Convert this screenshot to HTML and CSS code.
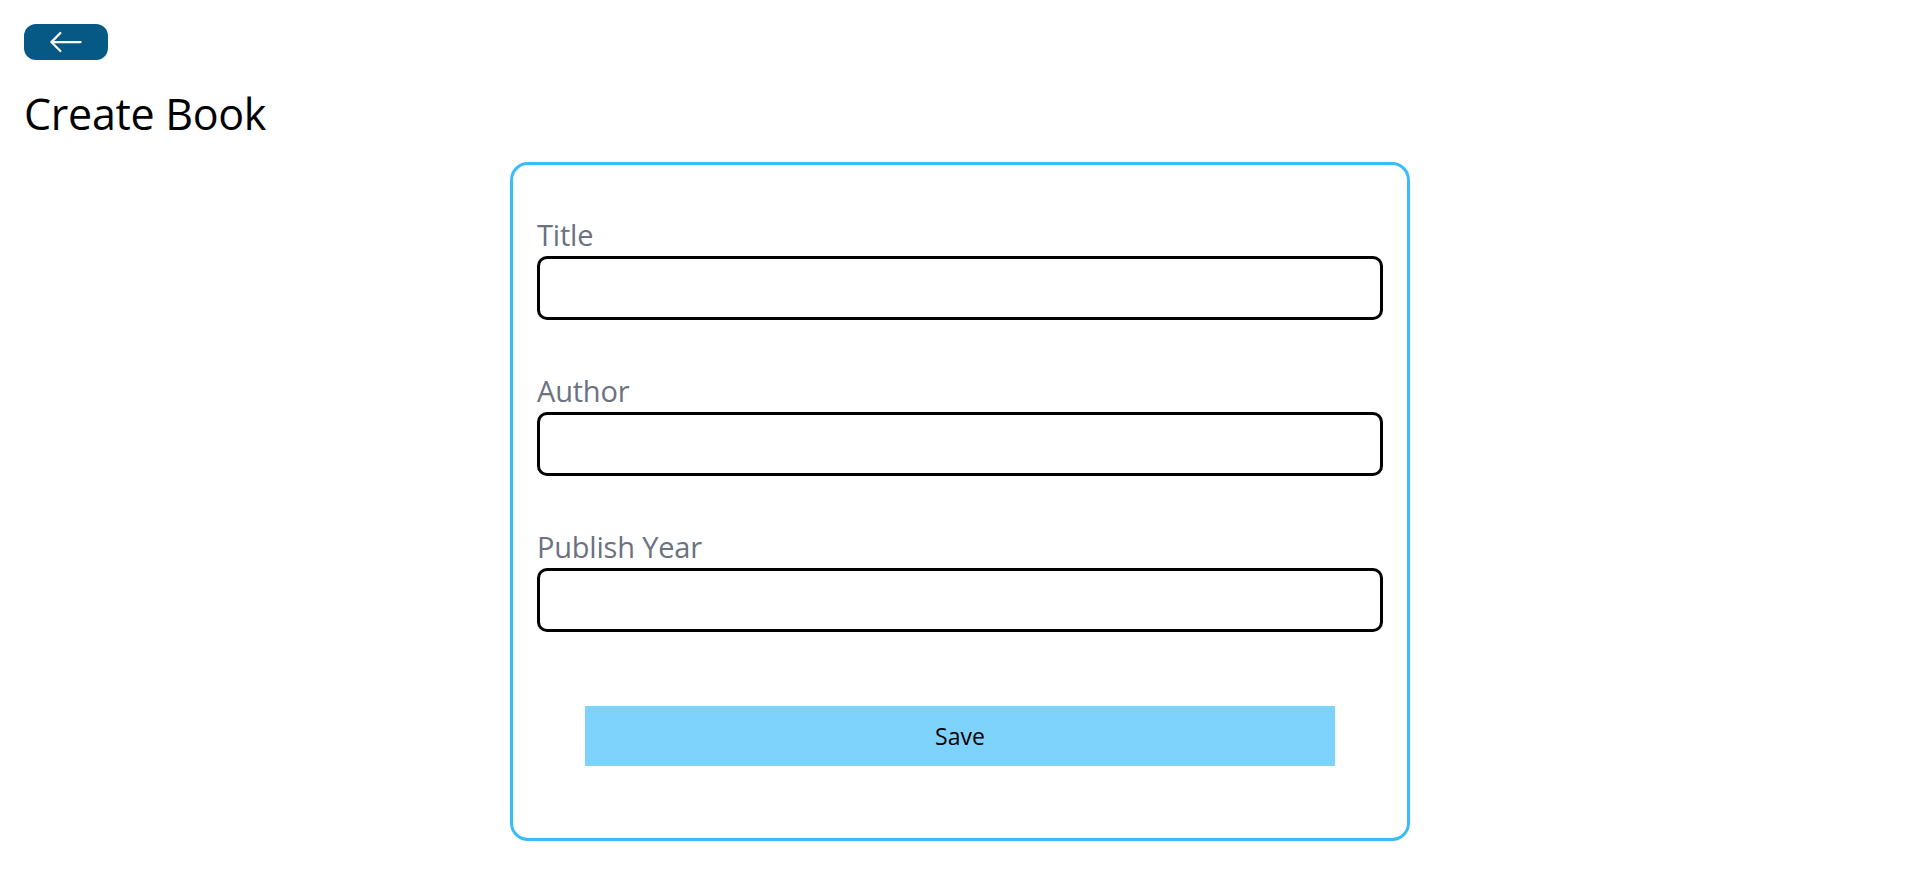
FILE: index.html
```html
<!DOCTYPE html>
<html lang="en">
<head>
<meta charset="utf-8">
<title>Create Book</title>
<link rel="stylesheet" href="styles.css">
</head>
<body>
<div class="page">
  <div class="top">
    <a class="back-btn" href="#" aria-label="Back">
      <svg class="back-icon" viewBox="0 0 16 16" fill="currentColor" aria-hidden="true">
        <path fill-rule="evenodd" d="M15 8a.5.5 0 0 0-.5-.5H2.707l3.147-3.146a.5.5 0 1 0-.708-.708l-4 4a.5.5 0 0 0 0 .708l4 4a.5.5 0 0 0 .708-.708L2.707 8.5H14.5A.5.5 0 0 0 15 8z"/>
      </svg>
    </a>
  </div>
  <h1 class="heading">Create Book</h1>
  <form class="card">
    <div class="field">
      <label class="label">Title</label>
      <input class="input" type="text">
    </div>
    <div class="field">
      <label class="label">Author</label>
      <input class="input" type="text">
    </div>
    <div class="field">
      <label class="label">Publish Year</label>
      <input class="input" type="number">
    </div>
    <button class="save-btn" type="button">Save</button>
  </form>
</div>
</body>
</html>
```

FILE: styles.css
```css
* {
  box-sizing: border-box;
}

html, body {
  margin: 0;
  background: #ffffff;
}

body {
  font-family: "Open Sans", "Noto Sans", "Liberation Sans", sans-serif;
  color: #000000;
}

.page {
  padding: 24px;
}

.top {
  display: flex;
}

.back-btn {
  display: inline-flex;
  align-items: center;
  height: 36px;
  padding: 0 24px;
  background: #075985;
  color: #ffffff;
  border-radius: 12px;
}

.back-icon {
  width: 36px;
  height: 36px;
  display: block;
}

.heading {
  margin: 24px 0 21px;
  padding-top: 3px;
  font-size: 43px;
  line-height: 54px;
  font-weight: 400;
  letter-spacing: -0.3px;
}

.card {
  width: 900px;
  margin: 0 auto;
  display: flex;
  flex-direction: column;
  border: 3px solid #38bdf8;
  border-radius: 18px;
  padding: 24px;
}

.field {
  margin: 24px 0 25px;
  display: flex;
  flex-direction: column;
}

.label {
  font-size: 29px;
  line-height: 43px;
  color: #6b7280;
  letter-spacing: -0.2px;
}

.input {
  display: block;
  width: 100%;
  height: 64px;
  border: 3px solid #000000;
  border-radius: 10px;
  padding: 12px 24px;
  font: inherit;
  font-size: 24px;
  outline: none;
  background: #ffffff;
}

.save-btn {
  margin: 49px 48px 48px;
  height: 60px;
  border: none;
  background: #7dd3fc;
  font-family: inherit;
  font-size: 23px;
  color: #000000;
  padding: 0;
}
```
